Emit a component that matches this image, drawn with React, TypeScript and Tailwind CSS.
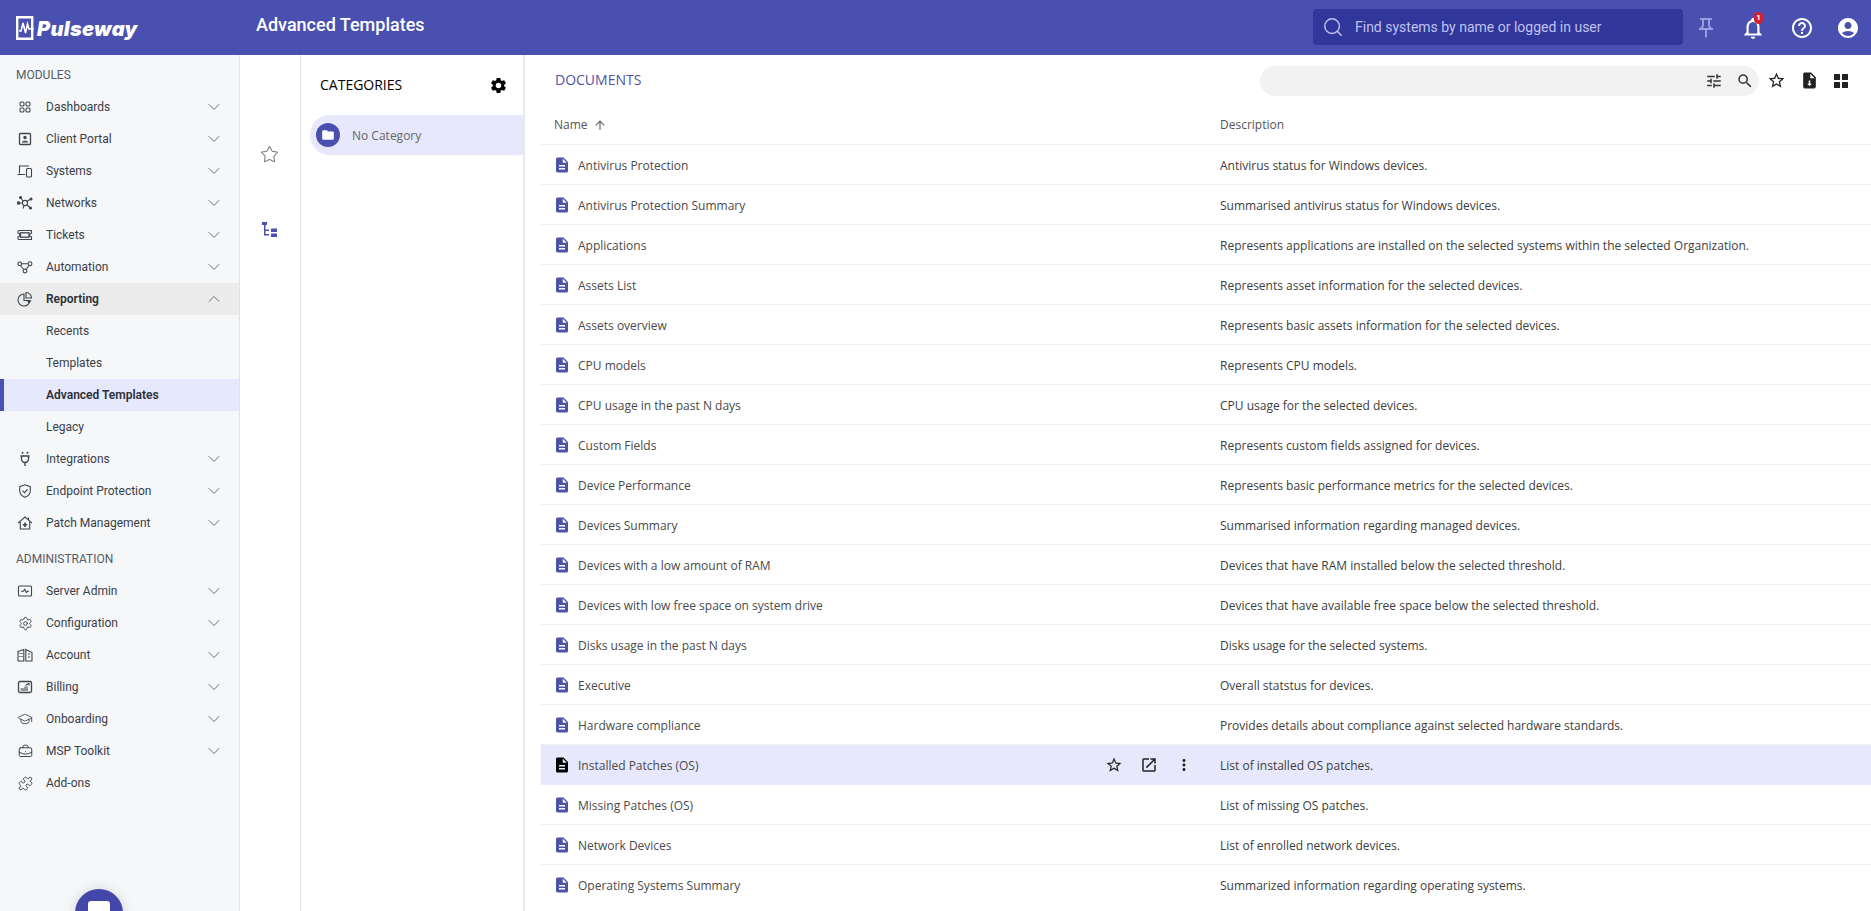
import { BriefcaseBusiness, ChevronDown, ChevronUp, GraduationCap, Puzzle, Search, Settings, Star } from 'lucide-react'
import {
  MdAccountCircle,
  MdArrowUpward,
  MdDescription,
  MdFolder,
  MdHelpOutline,
  MdMoreVert,
  MdOpenInNew,
  MdOutlineNotifications,
  MdOutlinePushPin,
  MdSearch,
  MdSettings,
  MdStarBorder,
  MdTune,
} from 'react-icons/md'
import type { ReactNode } from 'react'

interface MenuItem {
  label: string
  icon: ReactNode
  arrow?: boolean
}

function Glyph({ children }: { children: ReactNode }) {
  return (
    <svg width="16" height="16" viewBox="0 0 16 16" fill="none" stroke="currentColor" strokeWidth="1.1">
      {children}
    </svg>
  )
}

const modules: MenuItem[] = [
  {
    label: 'Dashboards',
    arrow: true,
    icon: (
      <Glyph>
        <rect x="3" y="3" width="4" height="4" rx="1.3" />
        <rect x="9" y="3" width="4" height="4" rx="1.3" />
        <rect x="3" y="9" width="4" height="4" rx="1.3" />
        <rect x="9" y="9" width="4" height="4" rx="1.3" />
      </Glyph>
    ),
  },
  {
    label: 'Client Portal',
    arrow: true,
    icon: (
      <Glyph>
        <rect x="2.5" y="2.5" width="11" height="11" rx="1" strokeWidth="1.3" />
        <circle cx="8" cy="6.5" r="1.7" fill="currentColor" stroke="none" />
        <path d="M4.8 11.5c0-2.4 6.4-2.4 6.4 0z" fill="currentColor" stroke="none" />
      </Glyph>
    ),
  },
  {
    label: 'Systems',
    arrow: true,
    icon: (
      <Glyph>
        <path d="M2.5 10.5V3h9.5M.5 11.5H8" />
        <rect x="9.5" y="5.5" width="5" height="8.5" rx="1" />
      </Glyph>
    ),
  },
  {
    label: 'Networks',
    arrow: true,
    icon: (
      <Glyph>
        <circle cx="8" cy="8" r="2.6" />
        <path d="M6 6L3.5 2.5M10 6.2L14 4M10 10l3.5 3M5.4 8H1.5M7 10.5l-1 3" />
        <circle cx="3.5" cy="2.5" r="1" fill="currentColor" />
        <circle cx="14" cy="4" r="1" fill="currentColor" />
        <circle cx="13.5" cy="13" r="1" fill="currentColor" />
        <circle cx="1.5" cy="8" r="1.2" fill="currentColor" />
      </Glyph>
    ),
  },
  {
    label: 'Tickets',
    arrow: true,
    icon: (
      <Glyph>
        <path d="M2 3.5h12.5v2.7a1.8 1.8 0 0 0 0 3.6v2.7H2a1 1 0 0 1-1-1V9.8a1.8 1.8 0 0 0 0-3.6V4.5a1 1 0 0 1 1-1z" />
        <rect x="3.5" y="5.8" width="8.5" height="4.4" strokeWidth="1.3" />
      </Glyph>
    ),
  },
  {
    label: 'Automation',
    arrow: true,
    icon: (
      <Glyph>
        <rect x="1" y="3" width="3.5" height="3.5" rx="1.2" />
        <circle cx="13" cy="4.7" r="1.9" />
        <circle cx="8" cy="12" r="1.9" />
        <path d="M4.5 4.7h6.6M3.5 6.5L6.7 10.5M12 6.3L9.2 10.5" />
      </Glyph>
    ),
  },
]

const afterReporting: MenuItem[] = [
  {
    label: 'Integrations',
    arrow: true,
    icon: (
      <Glyph>
        <circle cx="5.5" cy="1.8" r="1" fill="currentColor" stroke="none" />
        <circle cx="10.5" cy="1.8" r="1" fill="currentColor" stroke="none" />
        <path d="M3.5 5h9M4.5 5v3a3.5 3.5 0 0 0 7 0V5M8 11.5V15" strokeWidth="1.4" />
      </Glyph>
    ),
  },
  {
    label: 'Endpoint Protection',
    arrow: true,
    icon: (
      <Glyph>
        <path d="M8 1.8l5.3 1.9v4c0 3.2-2.3 5.4-5.3 6.6-3-1.2-5.3-3.4-5.3-6.6v-4z" />
        <path d="M5.5 7.7l2 2 3-3.4" />
      </Glyph>
    ),
  },
  {
    label: 'Patch Management',
    arrow: true,
    icon: (
      <Glyph>
        <path d="M1 8.2L8 2l7 6.2M3.3 6.6V14h9.4V6.6M11.5 2.5v2.5" />
        <path d="M8 7.5v4.4M5.8 9.7h4.4" strokeWidth="1.6" />
      </Glyph>
    ),
  },
]

const admin: MenuItem[] = [
  {
    label: 'Server Admin',
    arrow: true,
    icon: (
      <Glyph>
        <rect x="1.5" y="3" width="13" height="10" rx="1" />
        <path d="M4 8.3h2.3l1.4-2 1.6 3.2 1-1.2H12" />
      </Glyph>
    ),
  },
  {
    label: 'Configuration',
    arrow: true,
    icon: <Settings className="w-[15px] h-[15px]" strokeWidth={1.5} />,
  },
  {
    label: 'Account',
    arrow: true,
    icon: (
      <Glyph>
        <path d="M1 4.5L6.8 2.5V14H1zM8.8 2.5L15 5.5V14H8.8z" />
        <path d="M3 6v1M5 6v1M3 9v1M5 9v1M11 7h2M11 10h2" strokeWidth="1.2" />
      </Glyph>
    ),
  },
  {
    label: 'Billing',
    arrow: true,
    icon: (
      <Glyph>
        <rect x="1.5" y="2.5" width="13" height="11" rx="1.5" strokeWidth="1.3" />
        <path d="M3.5 12V9h3.5V7.5h4V12z" fill="currentColor" stroke="none" opacity="0.55" />
        <path d="M8.5 6.5l3-2M12 4v2.5" />
      </Glyph>
    ),
  },
  {
    label: 'Onboarding',
    arrow: true,
    icon: <GraduationCap className="w-4 h-4" strokeWidth={1.3} />,
  },
  {
    label: 'MSP Toolkit',
    arrow: true,
    icon: <BriefcaseBusiness className="w-[15px] h-[15px]" strokeWidth={1.6} />,
  },
  {
    label: 'Add-ons',
    icon: <Puzzle className="w-[15px] h-[15px]" strokeWidth={1.6} />,
  },
]

const documentos = [
  ['Antivirus Protection', 'Antivirus status for Windows devices.'],
  ['Antivirus Protection Summary', 'Summarised antivirus status for Windows devices.'],
  ['Applications', 'Represents applications are installed on the selected systems within the selected Organization.'],
  ['Assets List', 'Represents asset information for the selected devices.'],
  ['Assets overview', 'Represents basic assets information for the selected devices.'],
  ['CPU models', 'Represents CPU models.'],
  ['CPU usage in the past N days', 'CPU usage for the selected devices.'],
  ['Custom Fields', 'Represents custom fields assigned for devices.'],
  ['Device Performance', 'Represents basic performance metrics for the selected devices.'],
  ['Devices Summary', 'Summarised information regarding managed devices.'],
  ['Devices with a low amount of RAM', 'Devices that have RAM installed below the selected threshold.'],
  ['Devices with low free space on system drive', 'Devices that have available free space below the selected threshold.'],
  ['Disks usage in the past N days', 'Disks usage for the selected systems.'],
  ['Executive', 'Overall statstus for devices.'],
  ['Hardware compliance', 'Provides details about compliance against selected hardware standards.'],
  ['Installed Patches (OS)', 'List of installed OS patches.'],
  ['Missing Patches (OS)', 'List of missing OS patches.'],
  ['Network Devices', 'List of enrolled network devices.'],
  ['Operating Systems Summary', 'Summarized information regarding operating systems.'],
]

function MenuRow({ item }: { item: MenuItem }) {
  return (
    <div className="flex items-center h-8 text-xs text-[#3a4048]">
      <div className="w-[46px] flex justify-center pl-[4px] text-[#3f454c]">{item.icon}</div>
      <span className="flex-1">{item.label}</span>
      {item.arrow && <ChevronDown className="w-5 h-5 mr-[15px] text-[#6b7076]" strokeWidth={1.2} />}
    </div>
  )
}

function SubRow({ label, active }: { label: string; active?: boolean }) {
  return (
    <div
      className={`flex items-center h-8 pl-[46px] text-xs relative ${
        active ? 'bg-[#e6e8fb] font-semibold text-[#2a2f3a]' : 'text-[#3a4048]'
      }`}
    >
      {active && <div className="absolute left-0 top-0 bottom-0 w-1 bg-[#4a50b0]" />}
      {label}
    </div>
  )
}

function SectionTitle({ children }: { children: string }) {
  return <div className="h-9 flex items-center pl-4 pt-[3px] text-xs text-[#555b62]">{children}</div>
}

function Logo() {
  return (
    <div className="flex items-center pl-4 w-[240px] shrink-0">
      <svg width="19" height="24" viewBox="0 0 19 24" className="shrink-0">
        <path d="M1.200 1.200h15v21.600h-15z" fill="none" stroke="#fff" strokeWidth="2.400" />
        <path d="M3 15h2l2-8 2.500 10 2-9 1.500 5h5" fill="none" stroke="#fff" strokeWidth="1.600" />
      </svg>
      <span className="text-white italic font-black text-[20px] leading-none tracking-[0.3px] font-['Inter',sans-serif] ml-[2px] mt-[2px]">
        Pulseway
      </span>
    </div>
  )
}

function Header() {
  return (
    <header className="h-[55px] bg-[#4a50b0] flex items-center shrink-0 font-['Roboto',sans-serif]">
      <Logo />
      <div className="text-white text-[18px] font-medium pl-[16px] pb-[6px]">Advanced Templates</div>
      <div className="ml-auto flex items-center">
        <div className="w-[370px] h-9 mb-[1px] rounded bg-[#31369a] flex items-center">
          <Search className="w-[22px] h-[22px] ml-[9px] text-[#bfc2f0]" strokeWidth={1.6} />
          <span className="ml-[11px] text-sm text-[#bfc2f0]">Find systems by name or logged in user</span>
        </div>
        <div className="w-[45px] flex justify-center">
          <MdOutlinePushPin className="w-6 h-6 text-[#9a9ee0]" />
        </div>
        <div className="w-[50px] flex justify-center relative">
          <MdOutlineNotifications className="w-[26px] h-[26px] text-white" />
          <span className="absolute top-[-3px] left-[26px] w-[9px] h-[12px] rounded-full bg-[#d3202f] text-white text-[8px] leading-[12px] text-center font-bold">
            1
          </span>
        </div>
        <div className="w-[48px] flex justify-center">
          <MdHelpOutline className="w-6 h-6 text-white" />
        </div>
        <div className="w-[46px] flex justify-center mr-[-1px] pr-[2px]">
          <MdAccountCircle className="w-6 h-6 text-white" />
        </div>
      </div>
    </header>
  )
}

function Sidebar() {
  return (
    <aside className="w-[240px] shrink-0 bg-[#f5f7f9] border-r border-[#dfe2e6] relative overflow-hidden font-['Roboto',sans-serif]">
      <SectionTitle>MODULES</SectionTitle>
      {modules.map((item) => (
        <MenuRow key={item.label} item={item} />
      ))}
      <div className="flex items-center h-8 text-xs font-semibold bg-[#ececec] text-[#2a2f3a]">
        <div className="w-[46px] flex justify-center pl-[4px] text-[#3f454c]">
          <Glyph>
            <path d="M7 3a6 6 0 1 0 6 6.500H7z" />
            <path d="M9 1.500a5.500 5.500 0 0 1 5.500 5.500H9z" />
            <path d="M9.500 9.500h5l-2.500 3z" fill="currentColor" stroke="none" />
          </Glyph>
        </div>
        <span className="flex-1">Reporting</span>
        <ChevronUp className="w-5 h-5 mr-[15px] text-[#6b7076]" strokeWidth={1.2} />
      </div>
      <SubRow label="Recents" />
      <SubRow label="Templates" />
      <SubRow label="Advanced Templates" active />
      <SubRow label="Legacy" />
      {afterReporting.map((item) => (
        <MenuRow key={item.label} item={item} />
      ))}
      <SectionTitle>ADMINISTRATION</SectionTitle>
      {admin.map((item) => (
        <MenuRow key={item.label} item={item} />
      ))}
      <div className="absolute left-[75px] top-[834px] w-12 h-12 rounded-full bg-[#4347aa] shadow-[0_0_12px_rgba(0,0,0,0.15)] flex justify-center pt-3">
        <div className="w-[22px] h-[22px] bg-white rounded-[3px]" />
      </div>
    </aside>
  )
}

function Categories() {
  return (
    <div className="w-[224px] shrink-0 border-r-2 border-[#e8e8e8]">
      <div className="flex items-center justify-between h-[60px] pl-[19px] pr-[15px]">
        <span className="text-sm text-black">CATEGORIES</span>
        <MdSettings className="w-[19px] h-[19px] text-black" />
      </div>
      <div className="ml-[9px] h-10 bg-[#e7e8fb] rounded-l-[20px] flex items-center pl-[6px]">
        <div className="w-6 h-6 rounded-full bg-[#4a50b0] flex items-center justify-center">
          <MdFolder className="w-[14px] h-[14px] text-white" />
        </div>
        <span className="ml-3 text-xs text-[#666] pt-[2px]">No Category</span>
      </div>
    </div>
  )
}

function DocsToolbar() {
  return (
    <div className="h-[50px] flex items-center pl-[30px]">
      <span className="text-sm font-medium text-[#4f53a5]">DOCUMENTS</span>
      <div className="ml-auto w-[499px] h-[30px] mt-[1px] rounded-full bg-[#f2f2f2] flex items-center justify-end pr-[5px] gap-[13px] text-[#333]">
        <MdTune className="w-[18px] h-[18px]" />
        <MdSearch className="w-[18px] h-[18px]" />
      </div>
      <MdStarBorder className="w-[19px] h-[19px] mt-[1px] ml-[8px] text-[#222]" />
      <svg width="19" height="19" viewBox="0 0 24 24" className="ml-[14px] mt-[1px]" fill="#222">
        <path d="M14 2H6c-1.100 0-2 .9-2 2v16c0 1.100.9 2 2 2h12c1.100 0 2-.9 2-2V8l-6-6zm-1 7V3.500L18.500 9H13z" />
        <path d="M11 12h2v4h2l-3 3-3-3h2z" fill="#fff" />
      </svg>
      <svg width="16" height="16" viewBox="0 0 16 16" className="ml-[14px] mr-[22px] mt-[1px]" fill="#222">
        <path d="M1 1h6v6H1zM9 1h6v6H9zM1 9h6v6H1zM9 9h6v6H9z" />
      </svg>
    </div>
  )
}

function DocRow({ nome, descricao, hover }: { nome: string; descricao: string; hover?: boolean }) {
  return (
    <div
      className={`h-10 flex items-center text-xs border-b last:border-b-0 ${
        hover ? 'bg-[#e7e8fb] border-[#e7e8fb]' : 'border-[#f0f0f0]'
      }`}
    >
      <div className="w-[679px] shrink-0 flex items-center pl-[12px] pr-[14px]">
        <MdDescription className={`w-[18px] h-[18px] shrink-0 ${hover ? 'text-black' : 'text-[#4f53a5]'}`} />
        <span className="ml-[7px] flex-1 text-[#4a4a4a] pt-[2px]">{nome}</span>
        {hover && (
          <div className="flex items-center gap-[17px] text-[#222] mr-[13px]">
            <MdStarBorder className="w-[18px] h-[18px]" />
            <MdOpenInNew className="w-[18px] h-[18px]" />
            <MdMoreVert className="w-[18px] h-[18px]" />
          </div>
        )}
      </div>
      <span className="text-[#3d3d3d] pt-[2px]">{descricao}</span>
    </div>
  )
}

function Documents() {
  return (
    <div className="flex-1 min-w-0 overflow-hidden">
      <DocsToolbar />
      <div className="ml-[16px]">
        <div className="h-10 flex items-center text-xs text-[#555] border-b border-[#f0f0f0]">
          <div className="w-[679px] shrink-0 flex items-center pl-[13px]">
            Name
            <MdArrowUpward className="w-[14px] h-[14px] ml-[5px] text-[#666]" />
          </div>
          <span>Description</span>
        </div>
        {documentos.map(([nome, descricao]) => (
          <DocRow key={nome} nome={nome} descricao={descricao} hover={nome === 'Installed Patches (OS)'} />
        ))}
      </div>
    </div>
  )
}

export default function App() {
  return (
    <div className="h-[911px] w-[1871px] overflow-hidden flex flex-col bg-white font-['Open_Sans',sans-serif]">
      <Header />
      <div className="flex flex-1 min-h-0">
        <Sidebar />
        <div className="w-[61px] shrink-0 border-r border-[#e5e5e5] flex flex-col items-center pr-[1px] text-[#777]">
          <Star className="w-[19px] h-[19px] mt-[90px]" strokeWidth={1.3} />
          <svg width="16" height="16" viewBox="0 0 16 16" className="mt-[58px] ml-[1px]" fill="#4a50b0">
            <path d="M0 0h5v3H0zM2 3h1.500v10H2zM2 7.500h5V9H2zM2 12h5v1.500H2zM9 6.500h6V10H9zM9 11.500h6V15H9z" />
          </svg>
        </div>
        <Categories />
        <Documents />
      </div>
    </div>
  )
}
